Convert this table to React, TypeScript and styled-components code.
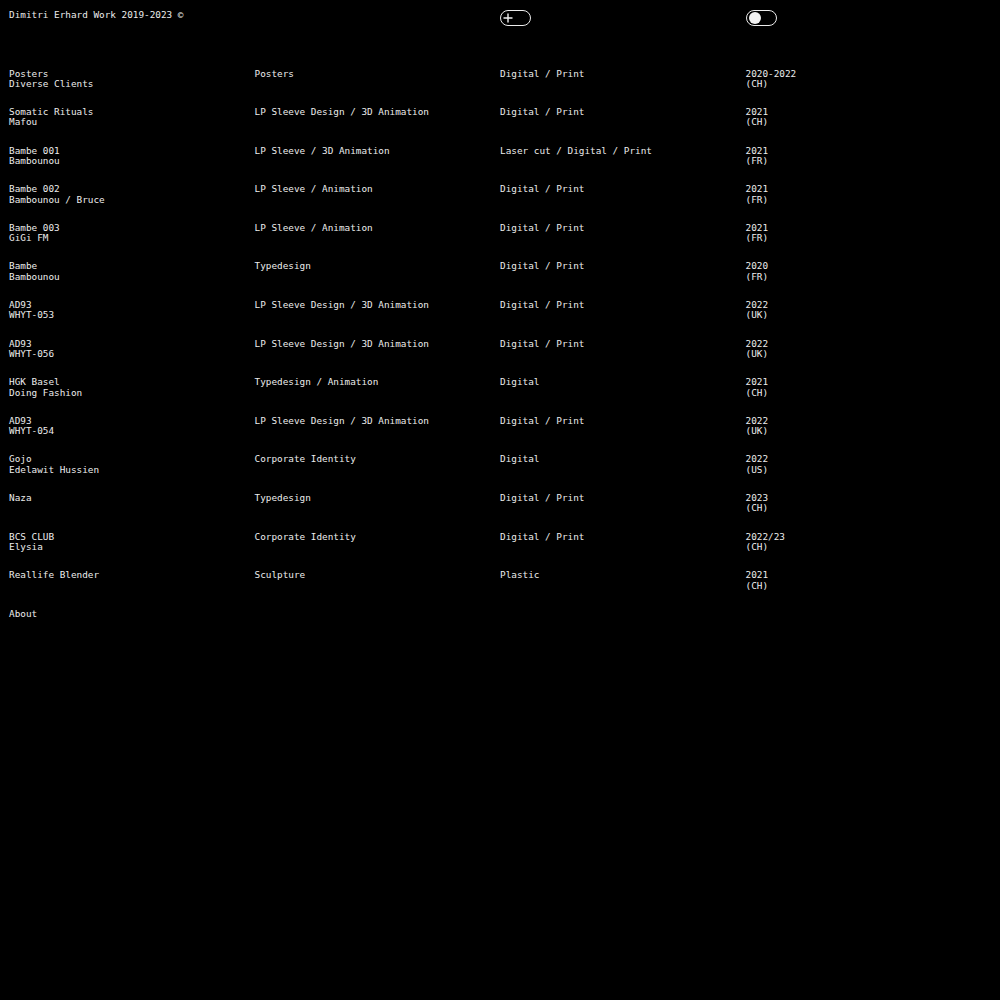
import React from "react";
import styled, { createGlobalStyle } from "styled-components";

const Global = createGlobalStyle`
  html, body { margin: 0; padding: 0; background: #000; }
  body {
    color: #ececec;
    font-family: "DejaVu Sans Mono", "Liberation Mono", monospace;
    font-size: 9.35px;
    line-height: 10.3px;
    -webkit-font-smoothing: antialiased;
  }
`;

const Page = styled.div`
  min-height: 1000px;
  padding: 9px 9px 0;
  box-sizing: border-box;
  background: #000;
`;

const Grid = styled.div`
  display: grid;
  grid-template-columns: repeat(4, 1fr);
  align-items: start;
`;

const Header = styled(Grid)`
  height: 59.5px;
`;

const Title = styled.div`
  white-space: nowrap;
  padding-top: 0.5px;
`;

const Pill = styled.button`
  width: 31px;
  height: 16px;
  margin-top: 1px;
  box-sizing: border-box;
  border: 1px solid #ececec;
  border-radius: 8px;
  background: transparent;
  padding: 0 0 0 2px;
  display: flex;
  align-items: center;
  cursor: pointer;
`;

const Knob = styled.span`
  width: 12px;
  height: 12px;
  border-radius: 50%;
  background: #f2f2f2;
`;

const List = styled.div`
  display: flex;
  flex-direction: column;
  gap: 18px;
`;

const Cell = styled.div`
  display: flex;
  flex-direction: column;
  min-height: 20.6px;
  white-space: nowrap;
`;

const Line = styled.span`
  display: block;
`;

const AboutLink = styled.a`
  display: block;
  margin-top: 18px;
  color: inherit;
  text-decoration: none;
`;

type Row = { a: string[]; b: string; c: string; year: string; loc: string };

const rows: Row[] = [
  { a: ["Posters", "Diverse Clients"], b: "Posters", c: "Digital / Print", year: "2020-2022", loc: "(CH)" },
  { a: ["Somatic Rituals", "Mafou"], b: "LP Sleeve Design / 3D Animation", c: "Digital / Print", year: "2021", loc: "(CH)" },
  { a: ["Bambe 001", "Bambounou"], b: "LP Sleeve / 3D Animation", c: "Laser cut / Digital / Print", year: "2021", loc: "(FR)" },
  { a: ["Bambe 002", "Bambounou / Bruce"], b: "LP Sleeve / Animation", c: "Digital / Print", year: "2021", loc: "(FR)" },
  { a: ["Bambe 003", "GiGi FM"], b: "LP Sleeve / Animation", c: "Digital / Print", year: "2021", loc: "(FR)" },
  { a: ["Bambe", "Bambounou"], b: "Typedesign", c: "Digital / Print", year: "2020", loc: "(FR)" },
  { a: ["AD93", "WHYT-053"], b: "LP Sleeve Design / 3D Animation", c: "Digital / Print", year: "2022", loc: "(UK)" },
  { a: ["AD93", "WHYT-056"], b: "LP Sleeve Design / 3D Animation", c: "Digital / Print", year: "2022", loc: "(UK)" },
  { a: ["HGK Basel", "Doing Fashion"], b: "Typedesign / Animation", c: "Digital", year: "2021", loc: "(CH)" },
  { a: ["AD93", "WHYT-054"], b: "LP Sleeve Design / 3D Animation", c: "Digital / Print", year: "2022", loc: "(UK)" },
  { a: ["Gojo", "Edelawit Hussien"], b: "Corporate Identity", c: "Digital", year: "2022", loc: "(US)" },
  { a: ["Naza"], b: "Typedesign", c: "Digital / Print", year: "2023", loc: "(CH)" },
  { a: ["BCS CLUB", "Elysia"], b: "Corporate Identity", c: "Digital / Print", year: "2022/23", loc: "(CH)" },
  { a: ["Reallife Blender"], b: "Sculpture", c: "Plastic", year: "2021", loc: "(CH)" },
];

const PlusIcon = () => (
  <svg width="10" height="10" viewBox="0 0 10 10" aria-hidden>
    <path d="M5 0.5V9.5M0.5 5H9.5" stroke="#f2f2f2" strokeWidth="1.4" fill="none" />
  </svg>
);

export default function App() {
  return (
    <>
      <Global />
      <Page>
        <Header>
          <Title>Dimitri Erhard Work 2019-2023 ©</Title>
          <div />
          <Pill aria-label="Expand">
            <PlusIcon />
          </Pill>
          <Pill aria-label="Toggle theme">
            <Knob />
          </Pill>
        </Header>
        <List>
          {rows.map((r, i) => (
            <Grid key={i}>
              <Cell>
                {r.a.map((t) => (
                  <Line key={t}>{t}</Line>
                ))}
              </Cell>
              <Cell>
                <Line>{r.b}</Line>
              </Cell>
              <Cell>
                <Line>{r.c}</Line>
              </Cell>
              <Cell>
                <Line>{r.year}</Line>
                <Line>{r.loc}</Line>
              </Cell>
            </Grid>
          ))}
        </List>
        <AboutLink href="#">About</AboutLink>
      </Page>
    </>
  );
}
